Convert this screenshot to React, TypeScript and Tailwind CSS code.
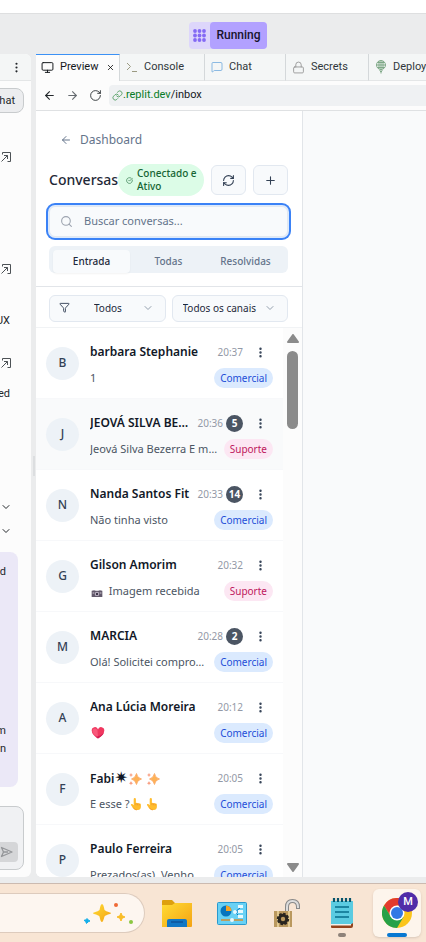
import React from "react";
import {
  ArrowLeft,
  ArrowRight,
  ChevronDown,
  CircleCheckBig,
  EllipsisVertical,
  Filter,
  Link,
  Lock,
  MessageSquare,
  Monitor,
  Plus,
  RefreshCw,
  RotateCw,
  Search,
  X,
} from "lucide-react";

type Conversation = {
  name: React.ReactNode;
  initial: string;
  time: string;
  unread?: number;
  message: React.ReactNode;
  team: "Comercial" | "Suporte";
  active?: boolean;
};

function Camera() {
  return (
    <svg viewBox="0 0 14 9" className="mr-0.5 inline-block h-2 w-3.5 align-[-2px]" aria-hidden="true">
      <path d="M1 2h12v7H1z" fill="#62596b" />
      <path d="M2 1h3v1H2zM9 1h3v1H9z" fill="#8d8494" />
      <circle cx="7" cy="5.5" r="2.5" fill="#c5bccb" />
      <circle cx="7" cy="5.5" r="1.4" fill="#40374b" />
      <path d="M2 4h2v1H2zM10 4h2v1h-2z" fill="#cec6d2" />
    </svg>
  );
}

function Heart() {
  return (
    <svg viewBox="0 0 14 12" className="ml-px inline-block h-3 w-3.5 align-[-2px]" aria-hidden="true">
      <path d="M7 11.5C3 9 .8 6.500.8 4A3.100 3.100 0 0 1 7 2.600 3.100 3.100 0 0 1 13.200 4c0 2.500-2.200 5-6.200 7.500Z" fill="#f0375f" />
      <path d="M1.500 4.500C1 1 5 .5 6.500 3.500L7 10C4 8.500 2 7 1.500 4.500Z" fill="#f8587b" />
      <path d="M7 11.500c3-2 5-3.500 5.800-5.500C10.500 8 8 9 5 10Z" fill="#d01c55" />
    </svg>
  );
}

function Sparkle() {
  return (
    <svg viewBox="0 0 14 14" className="mr-1 inline-block size-3.5 align-[-3px]" aria-hidden="true">
      <path d="M8.500 1.500Q9 6 13.500 7 9 8 8.500 12.500 7.500 8 3.500 7 7.500 6 8.500 1.500Z" fill="#fdb257" stroke="#fba35c" strokeWidth=".8" strokeLinejoin="round" />
      <path d="M3 .8 3.600 2.400 5.200 3 3.600 3.600 3 5.200 2.400 3.600.8 3l1.600-.6Z" fill="#f79272" />
      <path d="m3 9 .6 1.600 1.600.6-1.600.6L3 13.400l-.6-1.600-1.600-.6 1.600-.6Z" fill="#f79272" />
    </svg>
  );
}

function PointUp() {
  return (
    <svg viewBox="0 0 13 14" className="mr-1 inline-block h-3.5 w-3 align-[-3px]" aria-hidden="true">
      <path d="M4 1.800a1.200 1.200 0 0 1 2.400 0V6q1-.8 1.800.2 1-.6 1.800.3 1.700-.5 1.800 1.300V10q0 3.300-3.200 3.500H6.500Q4.500 13.500 3 11L1 8Q.8 6.500 2.500 7L4 8.300Z" fill="#ffbd2e" />
      <path d="M6.400 6v2.200M8.200 6.400v2M10 6.800v1.800M3.500 10.800q1.500 2.700 4 2.700" stroke="#ee8d2b" strokeWidth=".7" fill="none" />
    </svg>
  );
}

const conversations: Conversation[] = [
  { name: "barbara Stephanie", initial: "B", time: "20:37", message: "1", team: "Comercial" },
  { name: "JEOVÁ SILVA BEZERRA", initial: "J", time: "20:36", unread: 5, message: "Jeová Silva Bezerra E mail", team: "Suporte", active: true },
  { name: "Nanda Santos Fit", initial: "N", time: "20:33", unread: 14, message: "Não tinha visto", team: "Comercial" },
  { name: "Gilson Amorim", initial: "G", time: "20:32", message: <><Camera /> Imagem recebida</>, team: "Suporte" },
  { name: "MARCIA", initial: "M", time: "20:28", unread: 2, message: "Olá! Solicitei comprovante", team: "Comercial" },
  { name: "Ana Lúcia Moreira", initial: "A", time: "20:12", message: <Heart />, team: "Comercial" },
  { name: <>Fabi<span className="font-['DejaVu_Sans',sans-serif] text-base leading-5 font-bold">✷</span><Sparkle /><Sparkle /></>, initial: "F", time: "20:05", message: <>E esse ?<PointUp /><PointUp /></>, team: "Comercial" },
  { name: "Paulo Ferreira", initial: "P", time: "20:05", message: "Prezados(as), Venho", team: "Comercial" },
];

function ConversationRow({ item }: { item: Conversation }) {
  return (
    <li className={`flex h-[71px] shrink-0 items-center gap-[11px] border-b border-[#f7f8fa] px-2.5 ${item.active ? "bg-[#f9fafb]" : "bg-white"}`}>
      <span className="flex size-[33px] shrink-0 items-center justify-center rounded-full bg-[#edf2f7] text-xs font-medium text-[#334155]">
        {item.initial}
      </span>
      <div className="min-w-0 flex-1 pt-1">
        <div className="flex h-6 items-center">
          <h2 className="min-w-0 flex-1 truncate text-xs leading-5 font-semibold text-[#111827]">{item.name}</h2>
          <time className="ml-1 text-[10px] text-[#9399a6]">{item.time}</time>
          {item.unread && (
            <span className="ml-[3px] flex size-[17px] items-center justify-center rounded-full bg-[#4b5563] text-[10px] font-bold text-white">
              {item.unread}
            </span>
          )}
          <button aria-label="Mais opções" className="ml-1 flex w-[26px] justify-center text-[#334155]">
            <EllipsisVertical size={13} strokeWidth={2.5} />
          </button>
        </div>
        <div className="mt-0.5 flex h-6 items-center">
          <p className="min-w-0 flex-1 truncate text-[11px] leading-5 text-[#4b5563]">{item.message}</p>
          <span className={`ml-1.5 rounded-full px-1.5 text-[10px] leading-5 ${item.team === "Comercial" ? "bg-[#dbeafe] text-[#1d4ed8]" : "bg-[#fce7f3] text-[#be185d]"}`}>
            {item.team}
          </span>
        </div>
      </div>
    </li>
  );
}

function DeployIcon() {
  return (
    <svg viewBox="0 0 12 14" className="h-3.5 w-3 shrink-0" fill="none" stroke="#7fa887" strokeWidth="1" aria-hidden="true">
      <circle cx="6" cy="5" r="4.500" />
      <path d="M1.500 5h9M2.500 2.500h7M2.500 7.500h7M6 .5v13M4 1v8M8 1v8M4.500 10.500 6 12l1.500-1.500" />
    </svg>
  );
}

function ConsoleIcon() {
  return (
    <svg viewBox="0 0 12 12" className="size-3 shrink-0" fill="none" stroke="#9b9a82" aria-hidden="true">
      <path d="M1 2 4.500 5.500 1 9M6 10.500h5" />
    </svg>
  );
}

function OpenIcon() {
  return (
    <svg viewBox="0 0 12 12" className="size-3" fill="none" stroke="#4d5256" strokeWidth="1" aria-hidden="true">
      <path d="M2.500 3.500v-2h8v9H7.500M1.500 10.500l6-6M4 4.500h3.500V8" />
    </svg>
  );
}

function SendIcon() {
  return (
    <svg viewBox="0 0 13 12" className="h-3 w-[13px]" fill="none" stroke="currentColor" strokeWidth="1.300" strokeLinejoin="round" aria-hidden="true">
      <path d="M1.500 1.500 12 6 1.500 10.500 3.500 6ZM3.500 6H8" />
    </svg>
  );
}

function EditorTab({ icon, label, width }: { icon: React.ReactNode; label: string; width: string }) {
  return (
    <button className={`flex ${width} shrink-0 items-center gap-1.5 border-r border-b border-[#d4d8da] border-b-[#e4e6e7] bg-[#f4f6f6] px-1.5 text-[#30363b]`}>
      {icon}
      {label}
    </button>
  );
}

function ChatPane() {
  return (
    <aside className="flex w-[31px] shrink-0 flex-col items-end overflow-hidden rounded-r-md bg-[#fcfcfc] text-[11px] text-[#23272b]">
      <div className="flex h-[27px] w-full shrink-0 items-center justify-end border-b border-[#e4e6e7] bg-[#f4f6f6] pr-2">
        <button aria-label="Menu" className="flex"><EllipsisVertical size={13} /></button>
      </div>
      <button className="mt-[7px] mr-[7px] flex h-[25px] shrink-0 items-center rounded-r-lg border border-[#c8cbcd] bg-[#ecedef] pr-2 leading-4">
        chat
      </button>
      <button aria-label="Abrir" className="mt-[38px] mr-[19px] flex"><OpenIcon /></button>
      <button aria-label="Abrir" className="mt-[100px] mr-[19px] flex"><OpenIcon /></button>
      <p className="mt-[38px] mr-[21px] leading-4">UX</p>
      <button aria-label="Abrir" className="mt-7 mr-[19px] flex"><OpenIcon /></button>
      <p className="mt-[17px] mr-[21px] leading-4">ed</p>
      <button aria-label="Expandir" className="mt-[99px] mr-[19px] flex"><ChevronDown size={12} /></button>
      <button aria-label="Expandir" className="mt-3 mr-[19px] flex"><ChevronDown size={12} /></button>
      <div className="mt-[15px] mr-[13px] flex h-[235px] w-[30px] shrink-0 flex-col items-end rounded-lg bg-[#ebe8f7] pt-[11px] pr-3 leading-[18px]">
        <p>d</p>
        <p className="mt-[141px]">m</p>
        <p>n</p>
      </div>
      <div className="mt-[19px] mr-[7px] flex h-16 w-10 shrink-0 items-end justify-end rounded-lg border border-[#c8cbcd] bg-[#f0f1f3] pr-[5px] pb-[7px]">
        <button aria-label="Enviar" className="flex h-5 w-6 items-center justify-center rounded bg-[#d5d6d8] text-[#949699]">
          <SendIcon />
        </button>
      </div>
    </aside>
  );
}

function Inbox() {
  return (
    <section className="flex min-h-0 w-[267px] shrink-0 flex-col border-r border-[#e2e5e9] bg-white font-['Noto_Sans','Open_Sans',sans-serif]">
      <header className="border-b border-[#e2e5e9] pt-[19px] pr-[14px] pb-[13px] pl-[13px]">
        <a href="#dashboard" className="ml-[11px] flex items-center gap-2 text-xs leading-5 text-[#64748b]">
          <ArrowLeft size={12} />
          Dashboard
        </a>
        <div className="mt-[14px] flex items-center">
          <h1 className="w-[69px] shrink-0 text-sm leading-5 font-medium whitespace-nowrap text-[#1f2937]">Conversas</h1>
          <div className="mr-[7px] flex h-8 flex-1 items-center gap-1 rounded-full bg-[#dcfce7] pl-2 text-[10px] leading-[13px] font-medium text-[#166534]">
            <CircleCheckBig size={7} className="shrink-0" />
            <span>Conectado e<br />Ativo</span>
          </div>
          <button aria-label="Atualizar" className="flex h-[30px] w-[35px] items-center justify-center rounded-md border border-[#e2e8f0] bg-[#f8fafc] text-[#334155]">
            <RefreshCw size={13} />
          </button>
          <button aria-label="Nova conversa" className="ml-[7px] flex h-[30px] w-[35px] items-center justify-center rounded-md border border-[#e2e8f0] bg-[#f8fafc] text-[#334155]">
            <Plus size={13} />
          </button>
        </div>
        <label className="mt-2.5 flex h-[31px] items-center gap-[11px] rounded-md border border-[#e2e8f0] bg-[#f8fafc] pl-2.5 ring-2 ring-[#3b82f6] ring-offset-1 ring-offset-[#dbeafe]">
          <Search size={13} className="text-[#9ca3af]" />
          <input aria-label="Buscar conversas" placeholder="Buscar conversas..." className="min-w-0 flex-1 bg-transparent text-[11px] outline-none placeholder:text-[#64748b]" />
        </label>
        <div role="tablist" className="mt-[9px] grid h-[27px] grid-cols-3 rounded-md bg-[#edf2f7] px-1 pt-1 text-[10px] font-medium text-[#64748b]">
          <button role="tab" aria-selected="true" className="rounded bg-[#f8fafc] text-[#1e293b] shadow-xs">Entrada</button>
          <button role="tab" aria-selected="false">Todas</button>
          <button role="tab" aria-selected="false">Resolvidas</button>
        </div>
      </header>
      <div className="grid grid-cols-2 gap-1.5 border-b border-[#f1f3f5] pt-[7px] pr-[14px] pb-[5px] pl-[13px]">
        <div className="relative text-[#334155]">
          <Filter size={11} className="absolute top-2 left-2.5" />
          <select aria-label="Status" className="h-[27px] w-full appearance-none rounded-md border border-[#e2e8f0] bg-[#f8fafc] pl-11 text-[10px] text-[#1e293b]">
            <option>Todos</option>
          </select>
          <ChevronDown size={12} className="pointer-events-none absolute top-2 right-3 text-[#94a0ae]" />
        </div>
        <div className="relative">
          <select aria-label="Canal" className="h-[27px] w-full appearance-none rounded-md border border-[#e2e8f0] bg-[#f8fafc] pl-2.5 text-[10px] text-[#1e293b]">
            <option>Todos os canais</option>
          </select>
          <ChevronDown size={12} className="pointer-events-none absolute top-2 right-3 text-[#94a0ae]" />
        </div>
      </div>
      <div className="flex min-h-0 flex-1">
        <ul className="flex min-w-0 flex-1 flex-col overflow-hidden">
          {conversations.map((item) => (
            <ConversationRow key={item.initial} item={item} />
          ))}
        </ul>
        <div className="flex w-[19px] shrink-0 flex-col items-center bg-[#fcfcfc] pt-1.5 pb-[5px]" aria-hidden="true">
          <svg viewBox="0 0 12 9" className="h-[9px] w-3"><path d="M6 1 11 8H1Z" fill="#8b8b8b" stroke="#8b8b8b" strokeWidth="2" strokeLinejoin="round" /></svg>
          <div className="mt-2 h-[78px] w-[11px] rounded-full bg-[#8b8b8b]" />
          <svg viewBox="0 0 12 9" className="mt-auto h-[9px] w-3"><path d="M1 1h10L6 8Z" fill="#8b8b8b" stroke="#8b8b8b" strokeWidth="2" strokeLinejoin="round" /></svg>
        </div>
      </div>
    </section>
  );
}

function Workspace() {
  return (
    <main className="flex min-w-0 flex-1 flex-col overflow-hidden rounded-bl-md bg-[#fcfcfc]">
      <nav className="flex h-[27px] shrink-0 text-[11px]">
        <div className="flex w-[84px] shrink-0 items-center border-t border-r border-t-[#3b91f5] border-r-[#d4d8da] bg-[#fcfcfc] pb-0.5 pl-[5px]">
          <button className="flex flex-1 items-center gap-1.5 text-[#14181b]"><Monitor size={13} strokeWidth={1.8} />Preview</button>
          <button aria-label="Fechar Preview" className="pr-1"><X size={9} /></button>
        </div>
        <EditorTab width="w-[85px]" label="Console" icon={<ConsoleIcon />} />
        <EditorTab width="w-[81px]" label="Chat" icon={<MessageSquare size={12} strokeWidth={1.5} className="text-[#68a6dc]" />} />
        <EditorTab width="w-[83px]" label="Secrets" icon={<Lock size={13} strokeWidth={1.7} className="text-[#999]" />} />
        <EditorTab width="w-[120px]" label="Deployments" icon={<DeployIcon />} />
      </nav>
      <div className="flex h-[30px] shrink-0 items-center border-b border-[#dfe1e3] pl-[7px]">
        <div className="flex gap-2.5 text-[#22272b]">
          <button aria-label="Voltar"><ArrowLeft size={13} /></button>
          <button aria-label="Avançar" className="text-[#666b70]"><ArrowRight size={13} /></button>
          <button aria-label="Recarregar"><RotateCw size={13} strokeWidth={1.6} /></button>
        </div>
        <div className="ml-[7px] flex h-[21px] min-w-0 flex-1 items-center rounded-l bg-[#eff1f3] pl-[3px] text-[11px]">
          <Link size={11} className="text-[#58a168]" />
          <span className="text-[#087c26]">.replit.dev</span>
          <span className="text-[#14181b]">/inbox</span>
        </div>
      </div>
      <div className="flex min-h-0 flex-1 bg-[#f9fafb]">
        <Inbox />
      </div>
    </main>
  );
}

function TaskIcon({ label, active, running, children }: { label: string; active?: boolean; running?: boolean; children: React.ReactNode }) {
  return (
    <button aria-label={label} className={`relative flex size-12 shrink-0 items-center justify-center rounded-md ${active ? "bg-[#fdf5ec] shadow-sm" : ""}`}>
      {children}
      {active && <span className="absolute bottom-0 h-1 w-5 rounded-full bg-[#0878d1]" />}
      {running && <span className="absolute bottom-0 h-1 w-2 rounded-full bg-[#8e8279]" />}
    </button>
  );
}

function Taskbar() {
  return (
    <footer className="flex h-[59px] shrink-0 items-center gap-[7px] overflow-hidden border-t border-[#cbbab0] bg-[#f8e5d4]">
      <div className="mr-px flex h-10 w-[145px] shrink-0 items-center justify-end rounded-r-full border border-l-0 border-[#ddcbbd] bg-[#fdf6f0] pr-2.5">
        <svg viewBox="0 0 52 24" className="h-6 w-[52px]" aria-hidden="true">
          <defs><linearGradient id="gold" x2="1" y2="1"><stop stopColor="#ffdc35" /><stop offset="1" stopColor="#f4a213" /></linearGradient></defs>
          <path d="M20 3Q21.500 3 22.500 9 23.500 10 28 11.500 30 12 28 13 23.500 14 22.500 15.500 21 21 20 21 18.500 21 17.500 15.500 16.500 14 12 13 10 12 12 11.500 16.500 10 17.500 9 18.500 3 20 3Z" fill="url(#gold)" />
          <path d="M39 12l1.200 2.800L43 16l-2.800 1.200L39 20l-1.200-2.800L35 16l2.800-1.200Z" fill="#f9bd28" stroke="#f9bd28" strokeLinejoin="round" />
          <path d="M5 17.500 6.200 19 8 20 6.200 20.800 4.500 22.500 3.600 20.500 2 19.300 3.900 18.900Z" fill="#12aeea" stroke="#12aeea" />
          <circle cx="34" cy="4" r="2" fill="#ef6936" /><circle cx="49" cy="21" r="2" fill="#8bc742" />
        </svg>
      </div>
      <TaskIcon label="Explorador de Arquivos">
        <svg viewBox="0 0 30 27" className="h-[27px] w-[30px]">
          <path d="M0 1q0-1 1-1h9l3 3h16q1 0 1 1v6H0Z" fill="#dda00f" />
          <path d="M0 5h10l3-2h17v23q0 1-1 1H0Z" fill="url(#gold)" />
          <path d="M5 27v-6q0-2 2-2h16q2 0 2 2v6Z" fill="#1277c5" /><path d="M9 22h12" stroke="#0b4386" />
        </svg>
      </TaskIcon>
      <TaskIcon label="Painel de Controle">
        <svg viewBox="0 0 30 23" className="h-[23px] w-[30px]">
          <rect x=".5" y=".5" width="29" height="22" rx="1" fill="#69d1f4" stroke="#2999ce" />
          <circle cx="9" cy="9" r="5.500" fill="#0875bd" /><path d="M9 9V3.500A5.500 5.500 0 0 1 14.500 9Z" fill="#f6a323" />
          <path d="m18 10 5-4m-5 4h5m-5 0 4 4" stroke="#0875bd" /><g fill="#e8faff"><circle cx="18" cy="10" r="2" /><rect x="21" y="3" width="5" height="3" /><rect x="21" y="8" width="5" height="3" /><rect x="21" y="13" width="5" height="3" /></g>
          <path d="M4 18h22" stroke="#d58e32" strokeWidth="1.500" /><circle cx="15" cy="18" r="2" fill="#e8faff" />
        </svg>
      </TaskIcon>
      <TaskIcon label="Cadeado">
        <svg viewBox="0 0 26 28" className="h-7 w-[26px]">
          <path d="M13 14V8q0-6 5.500-6T24 8v2" fill="none" stroke="#888" strokeWidth="4" /><path d="M13 13V8q0-6 5.500-6T24 8v1" fill="none" stroke="#ddd" strokeWidth="2" />
          <path d="M0 12h18v16H0Z" fill="#ba985e" /><path d="M3 12h2v16H3zM14 12h2v16h-2z" fill="#e2c991" />
          <circle cx="9" cy="20" r="5.200" fill="#29251f" stroke="#29251f" strokeWidth="2" strokeDasharray="2.500 1.500" /><circle cx="9" cy="20" r="2.200" fill="#ba985e" />
        </svg>
      </TaskIcon>
      <TaskIcon label="Bloco de Notas" running>
        <svg viewBox="0 0 22 30" className="h-[30px] w-[22px]">
          <path d="M0 3h22v22q0 2-2 2H0Z" fill="#5bcbe1" /><path d="M0 27h19l3-2v3q0 2-2 2H1q-1 0-1-1Z" fill="#94431d" /><path d="M0 26h20v1.500H0Z" fill="#f4f0e9" />
          <path d="M3 0v4M7 0v4M11 0v4M15 0v4M19 0v4" stroke="#08546b" strokeWidth="2.200" /><path d="M4 9h14M4 14h14M4 19h14" stroke="#086f8c" strokeWidth="1.500" />
        </svg>
      </TaskIcon>
      <TaskIcon label="Google Chrome" active>
        <svg viewBox="0 0 30 30" className="size-[30px]">
          <circle cx="15" cy="15" r="15" fill="#fbc51b" />
          <path d="M2 7.500A15 15 0 0 1 28 7.500H15L9 19Z" fill="#e33b2e" />
          <path d="M2 7.500A15 15 0 0 0 15 30l6.500-11H9Z" fill="#26a148" />
          <circle cx="15" cy="15" r="7.500" fill="#fff" /><circle cx="15" cy="15" r="6" fill="#3378e5" />
        </svg>
        <span className="absolute top-[3px] right-[3px] flex size-5 items-center justify-center rounded-full bg-[#512da8] text-[11px] font-medium text-white">M</span>
      </TaskIcon>
    </footer>
  );
}

export default function App() {
  return (
    <div className="flex h-screen flex-col overflow-hidden bg-[#ebeced] font-['Roboto',sans-serif]">
      <div className="h-[14px] shrink-0 border-b border-[#dedfe0] bg-white" />
      <div className="flex h-10 shrink-0 items-center pt-0.5 pl-[189px]">
        <button className="flex h-[27px] items-center rounded bg-[#ddd6fb] text-xs font-medium text-[#18142c]">
          <span className="flex w-[21px] justify-center">
            <svg viewBox="0 0 13 13" className="size-[13px]" fill="#846af4" aria-hidden="true">
              {[2, 6.5, 11].map((y) => [2, 6.5, 11].map((x) => <circle key={`${x}-${y}`} cx={x} cy={y} r="1.900" />))}
            </svg>
          </span>
          <span className="flex h-full w-[57px] items-center justify-center rounded bg-[#b2a1ff]">Running</span>
        </button>
      </div>
      <div className="flex min-h-0 flex-1">
        <ChatPane />
        <div className="flex w-[5px] shrink-0 items-center"><span className="mx-auto h-5 w-0.5 bg-[#dcdee0]" /></div>
        <Workspace />
      </div>
      <div className="h-1.5 shrink-0" />
      <Taskbar />
    </div>
  );
}
